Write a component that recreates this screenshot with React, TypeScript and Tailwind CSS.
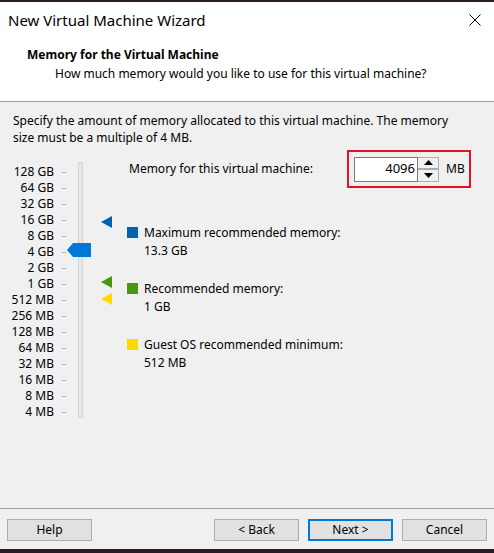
import React from "react";

const SCALE = [
  "128 GB", "64 GB", "32 GB", "16 GB", "8 GB", "4 GB", "2 GB", "1 GB",
  "512 MB", "256 MB", "128 MB", "64 MB", "32 MB", "16 MB", "8 MB", "4 MB",
];

function Marker({ color, className }: { color: string; className: string }) {
  return (
    <svg width="11" height="12" viewBox="0 0 11 12" className={`absolute ${className}`}>
      <polygon points="0,6 11,0 11,12" fill={color} />
    </svg>
  );
}

function MemorySlider() {
  return (
    <div className="relative w-[116px] shrink-0">
      <div className="flex">
        <div className="mt-[14px] flex flex-col">
          {SCALE.map((s) => (
            <div key={s} className="flex h-[16px] items-center">
              <span className="flex w-[41px] justify-end whitespace-nowrap leading-[16px]">{s}</span>
              <span className="ml-[8px] h-px w-[4px] bg-[#b4b4b4]" />
            </div>
          ))}
        </div>
        <div className="ml-[12px] mt-[12px] h-[256px] w-[5px] border border-[#d6d6d6] bg-[#e7e7e7]" />
      </div>

      {/* slider thumb at 4 GB */}
      <svg width="24" height="14" viewBox="0 0 24 14" className="absolute left-[54px] top-[93px]">
        <polygon points="0,7 6,0 24,0 24,14 6,14" fill="#0078d7" />
      </svg>

      <Marker color="#0063b1" className="left-[88px] top-[66px]" />
      <Marker color="#4a9611" className="left-[88px] top-[126px]" />
      <Marker color="#ffd800" className="left-[88px] top-[143px]" />
    </div>
  );
}

function Legend({ color, label, value }: { color: string; label: string; value: string }) {
  return (
    <div className="-ml-[2px] flex items-start">
      <span className={`mt-[3px] h-[11px] w-[11px] shrink-0 ${color}`} />
      <div className="ml-[6px] leading-[18px]">
        <div>{label}</div>
        <div>{value}</div>
      </div>
    </div>
  );
}

function Button({ children, primary }: { children: React.ReactNode; primary?: boolean }) {
  return (
    <button
      className={`h-[22px] w-[85px] bg-[#e1e1e1] text-[12px] leading-none text-black ${
        primary ? "border-2 border-[#0078d7]" : "border border-[#adadad]"
      }`}
    >
      {children}
    </button>
  );
}

export default function App() {
  return (
    <div
      className="flex h-[553px] w-[494px] flex-col overflow-hidden bg-[#f0f0f0] text-[12px] text-black"
      style={{ fontFamily: '"Noto Sans", "Open Sans", sans-serif' }}
    >
      <div className="h-[2px] shrink-0 bg-[#2a1b28]" />

      {/* Title + header */}
      <div className="h-[100px] shrink-0 border-b border-[#a0a0a0] bg-white">
        <div className="flex h-[36px] items-center pl-[8px] pr-[13px]">
          <span className="text-[15px] leading-none">New Virtual Machine Wizard</span>
          <svg width="12" height="12" viewBox="0 0 12 12" className="ml-auto">
            <path d="M0.5 0.5 L11.5 11.5 M11.5 0.5 L0.5 11.5" stroke="#000" strokeWidth="1" />
          </svg>
        </div>
        <div className="pl-[27px] pt-[8px] font-bold leading-[18px]">Memory for the Virtual Machine</div>
        <div className="pl-[55px] pt-[1px] leading-[18px]">
          How much memory would you like to use for this virtual machine?
        </div>
      </div>

      {/* Body */}
      <div className="flex-1 px-[13px] pt-[10px]">
        <p className="leading-[17px]">
          Specify the amount of memory allocated to this virtual machine. The memory
          <br />
          size must be a multiple of 4 MB.
        </p>

        <div className="mt-[4px] flex">
          <MemorySlider />

          <div className="flex flex-col">
            <div className="flex items-center">
              <span className="w-[218px]">Memory for this virtual machine:</span>
              <div className="flex h-[38px] w-[124px] items-center border-2 border-[#e81123] pl-[5px]">
                <div className="flex h-[25px] w-[64px] items-center justify-end border border-[#7a7a7a] bg-white pr-[2px] text-[13px]">
                  4096
                </div>
                <div className="flex h-[25px] w-[21px] flex-col border border-l-0 border-[#adadad] bg-[#f0f0f0]">
                  <div className="flex flex-1 items-center justify-center border-b-2 border-[#adadad]">
                    <svg width="9" height="5" viewBox="0 0 9 5">
                      <polygon points="4.5,0 9,5 0,5" fill="#000" />
                    </svg>
                  </div>
                  <div className="flex flex-1 items-center justify-center">
                    <svg width="9" height="5" viewBox="0 0 9 5">
                      <polygon points="0,0 9,0 4.5,5" fill="#000" />
                    </svg>
                  </div>
                </div>
                <span className="ml-[7px]">MB</span>
              </div>
            </div>

            <div className="mt-[36px] flex flex-col gap-[20px]">
              <Legend color="bg-[#0063b1]" label="Maximum recommended memory:" value="13.3 GB" />
              <Legend color="bg-[#4a9611]" label="Recommended memory:" value="1 GB" />
              <Legend color="bg-[#ffd800]" label="Guest OS recommended minimum:" value="512 MB" />
            </div>
          </div>
        </div>
      </div>

      {/* Footer */}
      <div className="shrink-0 border-t border-[#a0a0a0] px-[7px] pb-[8px] pt-[10px]">
        <div className="flex items-center">
          <Button>Help</Button>
          <div className="ml-auto flex gap-[9px]">
            <Button>&lt; Back</Button>
            <Button primary>Next &gt;</Button>
            <Button>Cancel</Button>
          </div>
        </div>
      </div>
      <div className="h-[4px] shrink-0 bg-[#2a1b28]" />
    </div>
  );
}
